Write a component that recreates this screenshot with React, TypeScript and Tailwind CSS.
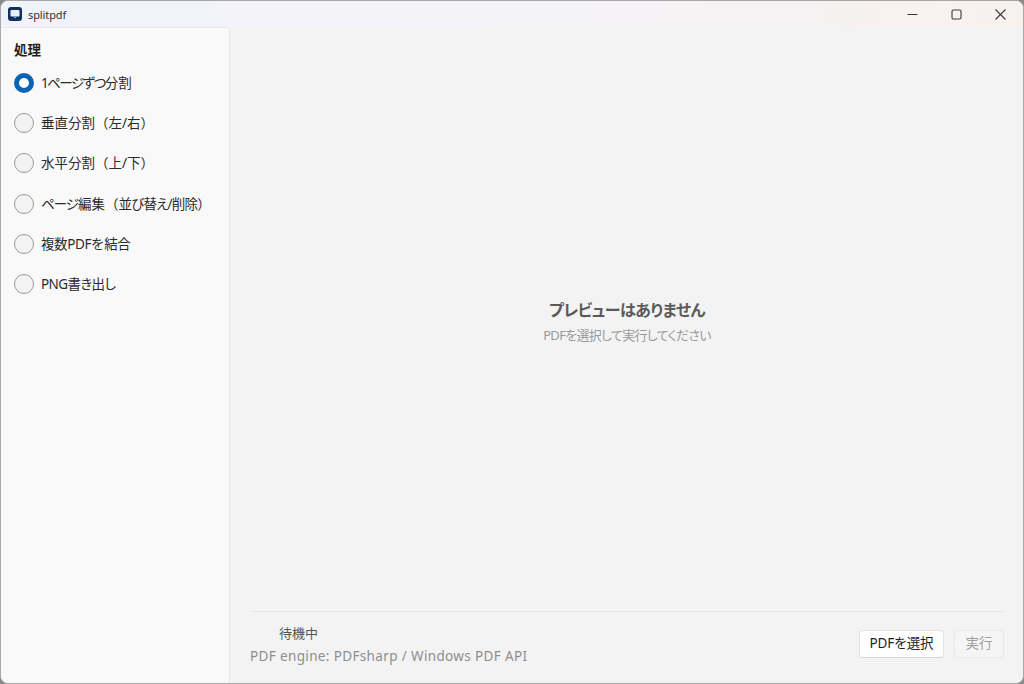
const font = { fontFamily: '"Noto Sans", "Noto Sans CJK JP", sans-serif' };

const palt = "[font-feature-settings:'palt']";

function Radio({ children, checked }: { children: React.ReactNode; checked?: boolean }) {
  return (
    <div className="flex h-[40.2px] items-center gap-[7px]">
      {checked ? (
        <span className="box-border h-5 w-5 shrink-0 rounded-full border-[5px] border-[#0a64b4] bg-white" />
      ) : (
        <span className="box-border h-5 w-5 shrink-0 rounded-full border border-[#9a9a9a] bg-[#f3f3f3]" />
      )}
      <span className="whitespace-nowrap text-[13.5px] leading-5 text-[#2a2a2a]">{children}</span>
    </div>
  );
}

export default function App() {
  return (
    <div style={font} className="h-[684px] w-[1024px] overflow-hidden bg-[#8a8a8a]">
      <div className="flex h-[684px] w-[1024px] flex-col overflow-hidden rounded-lg border border-[#a8a8a8] bg-[#f3f3f3]">
        <header className="flex h-[26px] shrink-0 items-center bg-gradient-to-r from-[#f1f3fa] via-[#f4f3f8] to-[#f8f1ee]">
          <svg width="14" height="14" viewBox="0 0 14 14" className="ml-[7px] shrink-0">
            <rect width="14" height="14" rx="3" fill="#12305f" />
            <rect x="2.5" y="3" width="9" height="6.5" rx="1" fill="#e8f1fb" />
            <path d="M5.5 9.5h3L7 11.5z" fill="#8fb8e8" />
          </svg>
          <span className="ml-[6px] text-[11px] leading-none tracking-[-0.1px] text-[#333333]">splitpdf</span>
          <div className="ml-auto mr-px flex h-full items-center text-[#3a3a3a]">
            <span className="flex w-[44px] justify-center">
              <svg width="11" height="11" viewBox="0 0 11 11"><path d="M0.5 5.5h10" stroke="currentColor" strokeWidth="1.1" /></svg>
            </span>
            <span className="flex w-[44px] justify-center">
              <svg width="11" height="11" viewBox="0 0 11 11"><rect x="1" y="1" width="9" height="9" rx="1.4" fill="none" stroke="currentColor" strokeWidth="1.1" /></svg>
            </span>
            <span className="flex w-[44px] justify-center">
              <svg width="11" height="11" viewBox="0 0 11 11"><path d="M0.5 0.5l10 10M10.5 0.5l-10 10" stroke="currentColor" strokeWidth="1.1" /></svg>
            </span>
          </div>
        </header>
        <div className="flex min-h-0 flex-1">
          <aside className="w-[229px] shrink-0 rounded-tr-[3px] border-r border-t border-[#e8e8e8] bg-[#f9f9f9] pl-[13px]">
            <div className="mb-[3px] mt-[12px] text-[13.5px] font-bold leading-5 text-[#1f1f1f]">処理</div>
            <div className="flex flex-col">
              <Radio checked>
                <span className={`${palt} tracking-[-1.5px]`}>1ページずつ</span>分割
              </Radio>
              <Radio>垂直分割（左/右）</Radio>
              <Radio>水平分割（上/下）</Radio>
              <Radio>
                <span className={`${palt} tracking-[-1px]`}>ページ</span>編集（
                <span className={`${palt} tracking-[-0.8px]`}>並び替え/削除</span>）
              </Radio>
              <Radio>
                <span className="tracking-[-0.4px]">複数PDFを結合</span>
              </Radio>
              <Radio>
                <span className={`${palt} tracking-[-0.6px]`}>PNG書き出し</span>
              </Radio>
            </div>
          </aside>
          <main className="flex min-w-0 flex-1 flex-col pb-[17px] pl-5 pr-[19px]">
            <div className="flex flex-1 flex-col items-center justify-center pt-[5px]">
              <div className={`${palt} text-base font-bold leading-6 tracking-[-0.5px] text-[#5a5a5a]`}>プレビューはありません</div>
              <div className={`${palt} mt-[3px] text-[13px] leading-5 tracking-[-0.7px] text-[#9a9a9a]`}>PDFを選択して実行してください</div>
            </div>
            <footer className="flex items-center justify-between border-t border-[#e6e6e6] pt-[11px]">
              <div>
                <div className="pl-[29px] text-[13px] leading-5 text-[#555555]">待機中</div>
                <div className="mt-[3px] text-[13.5px] leading-5 tracking-[0.36px] text-[#8e8e8e]">PDF engine: PDFsharp / Windows PDF API</div>
              </div>
              <div className="mb-[2px] flex gap-[10px]">
                <button className={`${palt} h-[28px] w-[85px] rounded border border-[#e5e5e5] border-b-[#d2d2d2] bg-white text-[13.5px] tracking-[-0.1px] text-[#1f1f1f]`}>PDFを選択</button>
                <button className="h-[28px] w-[50px] rounded border border-[#e8e8e8] bg-[#f5f5f5] text-[13.5px] text-[#a0a0a0]">実行</button>
              </div>
            </footer>
          </main>
        </div>
      </div>
    </div>
  );
}
